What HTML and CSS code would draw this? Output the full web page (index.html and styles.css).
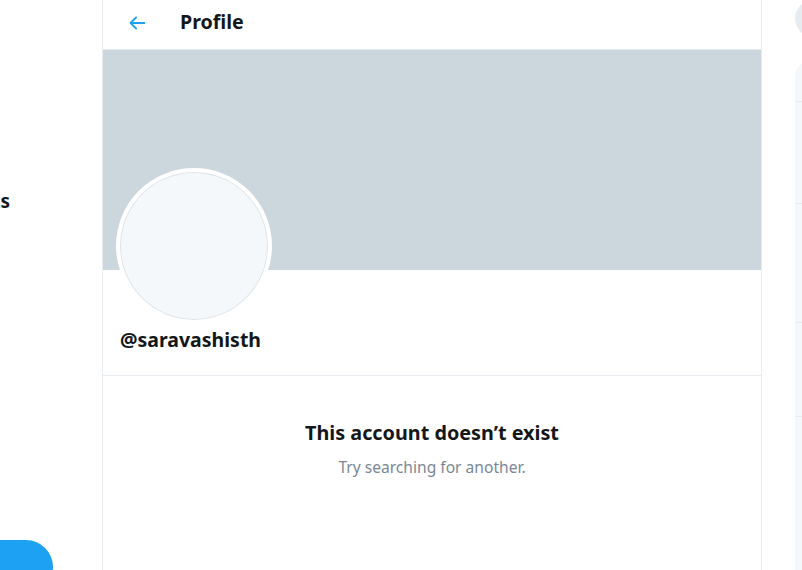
FILE: index.html
```html
<!DOCTYPE html>
<html>
<head>
<meta charset="utf-8">
<link rel="stylesheet" href="styles.css">
</head>
<body>
<div class="page">
  <nav class="nav">
    <div class="nav-spacer"></div>
    <div class="nav-item">Lists</div>
    <div class="nav-grow"></div>
    <div class="tweet-btn" aria-label="Tweet"></div>
  </nav>
  <main class="main">
    <header class="header">
      <svg class="back" viewBox="0 0 24 24" width="22" height="22"><path d="M20 11H7.414l4.293-4.293a1 1 0 0 0-1.414-1.414l-6 6a1 1 0 0 0 0 1.414l6 6a1 1 0 0 0 1.414-1.414L7.414 13H20a1 1 0 0 0 0-2z" fill="#1da1f2"/></svg>
      <h1 class="title">Profile</h1>
    </header>
    <div class="banner"></div>
    <div class="profile">
      <div class="avatar"></div>
      <div class="handle">@saravashisth</div>
    </div>
    <section class="empty">
      <div class="empty-title">This account doesn’t exist</div>
      <div class="empty-sub">Try searching for another.</div>
    </section>
  </main>
  <aside class="side">
    <div class="search"></div>
    <div class="panel">
      <div class="panel-row r1"></div>
      <div class="panel-row r2"></div>
      <div class="panel-row r3"></div>
      <div class="panel-row r4"></div>
    </div>
  </aside>
</div>
</body>
</html>
```
FILE: styles.css
```css
* { box-sizing: border-box; }
html, body { margin: 0; padding: 0; background: #fff; overflow: hidden; }
body { font-family: "Noto Sans", "Open Sans", sans-serif; color: #14171a; }
.page { display: flex; width: 802px; height: 570px; overflow: hidden; }
.nav { width: 102px; flex: none; display: flex; flex-direction: column; align-items: flex-end; overflow: hidden; }
.nav-spacer { height: 187px; flex: none; }
.nav-item { font-weight: 700; font-size: 19px; line-height: 28px; margin-right: 92px; white-space: nowrap; }
.nav-grow { flex: 1; }
.tweet-btn { flex: none; width: 230px; height: 54px; margin-right: 49px; margin-bottom: -24px; background: #1da1f2; border-radius: 27px; }
.main { width: 660px; flex: none; border-left: 1px solid #e6ecf0; border-right: 1px solid #e6ecf0; display: flex; flex-direction: column; }
.header { height: 50px; flex: none; display: flex; align-items: center; padding-left: 23px; border-bottom: 1px solid #e6ecf0; }
.back { margin-top: -3px; }
.title { margin: -6px 0 0 32px; font-size: 19.6px; font-weight: 700; line-height: 24px; }
.banner { height: 220px; flex: none; background: #ccd6dd; }
.profile { height: 106px; flex: none; border-bottom: 1px solid #e6ecf0; position: relative; }
.avatar { position: absolute; left: 13px; top: -102px; width: 156px; height: 156px; border-radius: 50%; background: #f5f8fa; border: 4px solid #fff; box-shadow: inset 0 0 0 1px #dfe4e8; }
.handle { position: absolute; left: 17px; top: 57px; font-size: 19.5px; font-weight: 700; line-height: 26px; }
.empty { display: flex; flex-direction: column; align-items: center; padding-top: 44px; }
.empty-title { font-size: 19.8px; font-weight: 700; line-height: 26px; }
.empty-sub { font-size: 15.6px; color: #7a8894; line-height: 20px; margin-top: 11px; }
.side { flex: 1; padding-left: 33px; display: flex; flex-direction: column; }
.search { height: 37px; width: 200px; background: #e6ecf0; border-radius: 19px; flex: none; }
.panel { margin-top: 25px; flex: 1; background: #f5f8fa; border-radius: 14px 0 0 0; width: 200px; }
.panel-row { border-bottom: 1px solid #e6ecf0; }
.r1 { height: 40px; }
.r2 { height: 102px; }
.r3 { height: 119px; }
.r4 { height: 94px; }
```
